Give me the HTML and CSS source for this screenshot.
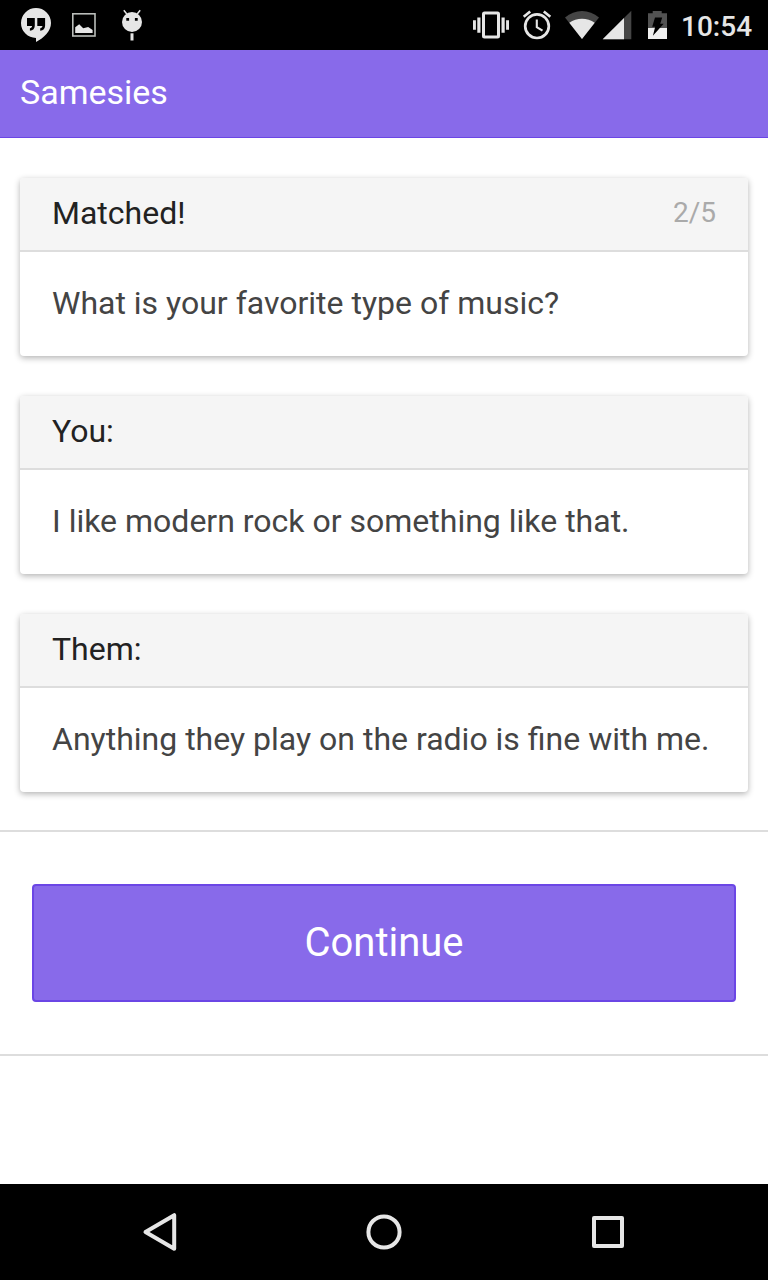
FILE: index.html
```html
<!DOCTYPE html>
<html lang="en">
<head>
<meta charset="utf-8">
<title>Samesies</title>
<link rel="stylesheet" href="styles.css">
</head>
<body>
<div class="status-bar">
  <div class="notifications">
    <svg width="32" height="50" viewBox="20 0 32 50"><path fill="#e6e6e6" d="M36 8a15 15 0 0 0 0 30v4c8-4 15-11 15-19A15 15 0 0 0 36 8z"/><path fill="#000" d="M27 18h7.8v7.4c0 3-1.7 4.9-4.9 5.4v-2.5c1.6-.5 2.2-1.2 2.2-2.3H27zM37.3 18h7.8v7.4c0 3-1.7 4.9-4.9 5.4v-2.5c1.6-.5 2.2-1.2 2.2-2.3h-5.1z"/></svg>
    <svg width="28" height="50" viewBox="70 0 28 50"><rect x="72.8" y="13.8" width="22.2" height="22.2" fill="none" stroke="#babdba" stroke-width="1.6"/><path fill="#e6e6e6" d="M75.2 33v-5.8l4-2.9 4 4 5-1.3 4.4 3v3z"/></svg>
    <svg width="24" height="50" viewBox="120 0 24 50"><path stroke="#e6e6e6" stroke-width="1.5" d="M123.8 10.3l3.2 4M140.2 10.3l-3.2 4"/><circle cx="132" cy="22" r="10" fill="#e6e6e6"/><path fill="#000" d="M126.3 18h2.8v2.8h-2.8zM134.9 18h2.8v2.8h-2.8z"/><path fill="#e6e6e6" d="M130.5 33.3h3v7.2h-3z"/></svg>
  </div>
  <div class="system">
    <svg width="40" height="50" viewBox="471 0 40 50"><rect x="483.5" y="13" width="15" height="24" rx="1" fill="none" stroke="#e6e6e6" stroke-width="3"/><path fill="#e6e6e6" d="M473 20.2h2.9v9.6H473zM477.3 17.4h3.2v15.3h-3.2zM501.5 17.4h3.2v15.3h-3.2zM506.1 20.2h2.9v9.6h-2.9z"/></svg>
    <svg width="30" height="50" viewBox="522 0 30 50"><g fill="none" stroke="#e6e6e6"><circle cx="537" cy="26.2" r="11.8" stroke-width="2.7"/><path stroke-width="2.6" d="M523.7 16.8l6.5-5.4M550.3 16.8l-6.5-5.4"/><path stroke-width="2.1" d="M536.8 19.5v7.6l5.7 3.6"/></g></svg>
    <svg width="36" height="50" viewBox="564 0 36 50"><path fill="#454545" d="M582 39l-17-21.5c9.8-8.7 24.2-8.7 34 0z"/><path fill="#e6e6e6" d="M582 39l-12.7-16.3c7.3-5.4 18.1-5.4 25.4 0z"/></svg>
    <svg width="30" height="50" viewBox="602 0 30 50"><path fill="#454545" d="M631.3 10.7v28.6h-28.6z"/><path fill="#e6e6e6" d="M624 18v21.3h-21.3z"/></svg>
    <svg width="20" height="50" viewBox="648 0 20 50"><path fill="#525252" d="M652.7 11h9v2.3h5.3V28h-19V13.3h4.7z"/><path fill="#f0f0f0" d="M648 28h19v11h-19z"/><path fill="#000" d="M655 17.5h7.2l-2 6.3h3.5L652.9 35.8l2.3-9h-3z"/></svg>
    <span class="clock">10:54</span>
  </div>
</div>
<header class="title-bar"><h1>Samesies</h1></header>
<main class="content">
  <div class="cards">
    <section class="card">
      <h2 class="card-head">Matched!<span class="count">2/5</span></h2>
      <p class="card-body">What is your favorite type of music?</p>
    </section>
    <section class="card">
      <h2 class="card-head">You:</h2>
      <p class="card-body">I like modern rock or something like that.</p>
    </section>
    <section class="card">
      <h2 class="card-head">Them:</h2>
      <p class="card-body">Anything they play on the radio is fine with me.</p>
    </section>
  </div>
  <div class="action"><button class="continue">Continue</button></div>
</main>
<nav class="nav-bar">
  <svg width="48" height="96" viewBox="136 1184 48 96"><path d="M145.5 1232l28.7-16.8v33.6z"/></svg>
  <svg width="48" height="96" viewBox="360 1184 48 96"><circle cx="384" cy="1232" r="15.6"/></svg>
  <svg width="48" height="96" viewBox="584 1184 48 96"><rect x="594" y="1218" width="28" height="28"/></svg>
</nav>
</body>
</html>
```
FILE: styles.css
```css
* { box-sizing: border-box; }
body {
  margin: 0;
  width: 768px;
  height: 1280px;
  display: flex;
  flex-direction: column;
  overflow: hidden;
  background: #fff;
  font-family: Roboto, sans-serif;
}
svg { display: block; flex: none; }
h1, h2, p { margin: 0; font-weight: 400; }
.status-bar {
  height: 50px;
  display: flex;
  justify-content: space-between;
  padding: 0 16px 0 20px;
  background: #000;
}
.notifications, .system { display: flex; }
.notifications svg:nth-child(2) { margin: 0 22px 0 18px; }
.system svg { margin-right: 2px; }
.system svg:nth-child(1) { margin-right: 11px; }
.system svg:nth-child(2) { margin-right: 12px; }
.system svg:nth-child(4) { margin-right: 16px; }
.system svg:nth-child(5) { margin-right: 13px; }
.clock {
  width: 71px;
  color: #e6e6e6;
  font-size: 28px;
  font-weight: 500;
  line-height: 53px;
  white-space: nowrap;
}
.title-bar {
  height: 88px;
  padding: 0 20px;
  border-bottom: 1px solid #6b46e5;
  background: #886aea;
}
.title-bar h1 { color: #fff; font-size: 34px; line-height: 84px; }
.content { flex: 1; }
.cards {
  display: flex;
  flex-direction: column;
  gap: 40px;
  padding: 40px 20px 38px;
}
.card {
  height: 178px;
  border-radius: 4px;
  overflow: hidden;
  background: #fff;
  box-shadow: 0 2px 6px rgba(0, 0, 0, 0.3);
}
.card-head {
  height: 74px;
  display: flex;
  justify-content: space-between;
  padding: 0 32px;
  border-bottom: 2px solid #ddd;
  background: #f5f5f5;
  color: #222;
  font-size: 32px;
  line-height: 71px;
}
.count { color: #aaa; font-size: 28px; line-height: 70px; }
.card-body {
  padding: 0 32px;
  color: #444;
  font-size: 32px;
  line-height: 103px;
  white-space: nowrap;
}
.action {
  height: 226px;
  padding: 52px 32px;
  border-top: 2px solid #ddd;
  border-bottom: 2px solid #ddd;
}
.continue {
  display: block;
  width: 100%;
  height: 118px;
  padding: 0;
  border: 2px solid #6b46e5;
  border-radius: 4px;
  background: #886aea;
  color: #fff;
  font: 400 40px/114px Roboto, sans-serif;
}
.nav-bar {
  height: 96px;
  display: flex;
  justify-content: space-between;
  padding: 0 136px;
  background: #000;
}
.nav-bar svg { fill: none; stroke: #e6e6e6; stroke-width: 4; stroke-linejoin: round; }
```
